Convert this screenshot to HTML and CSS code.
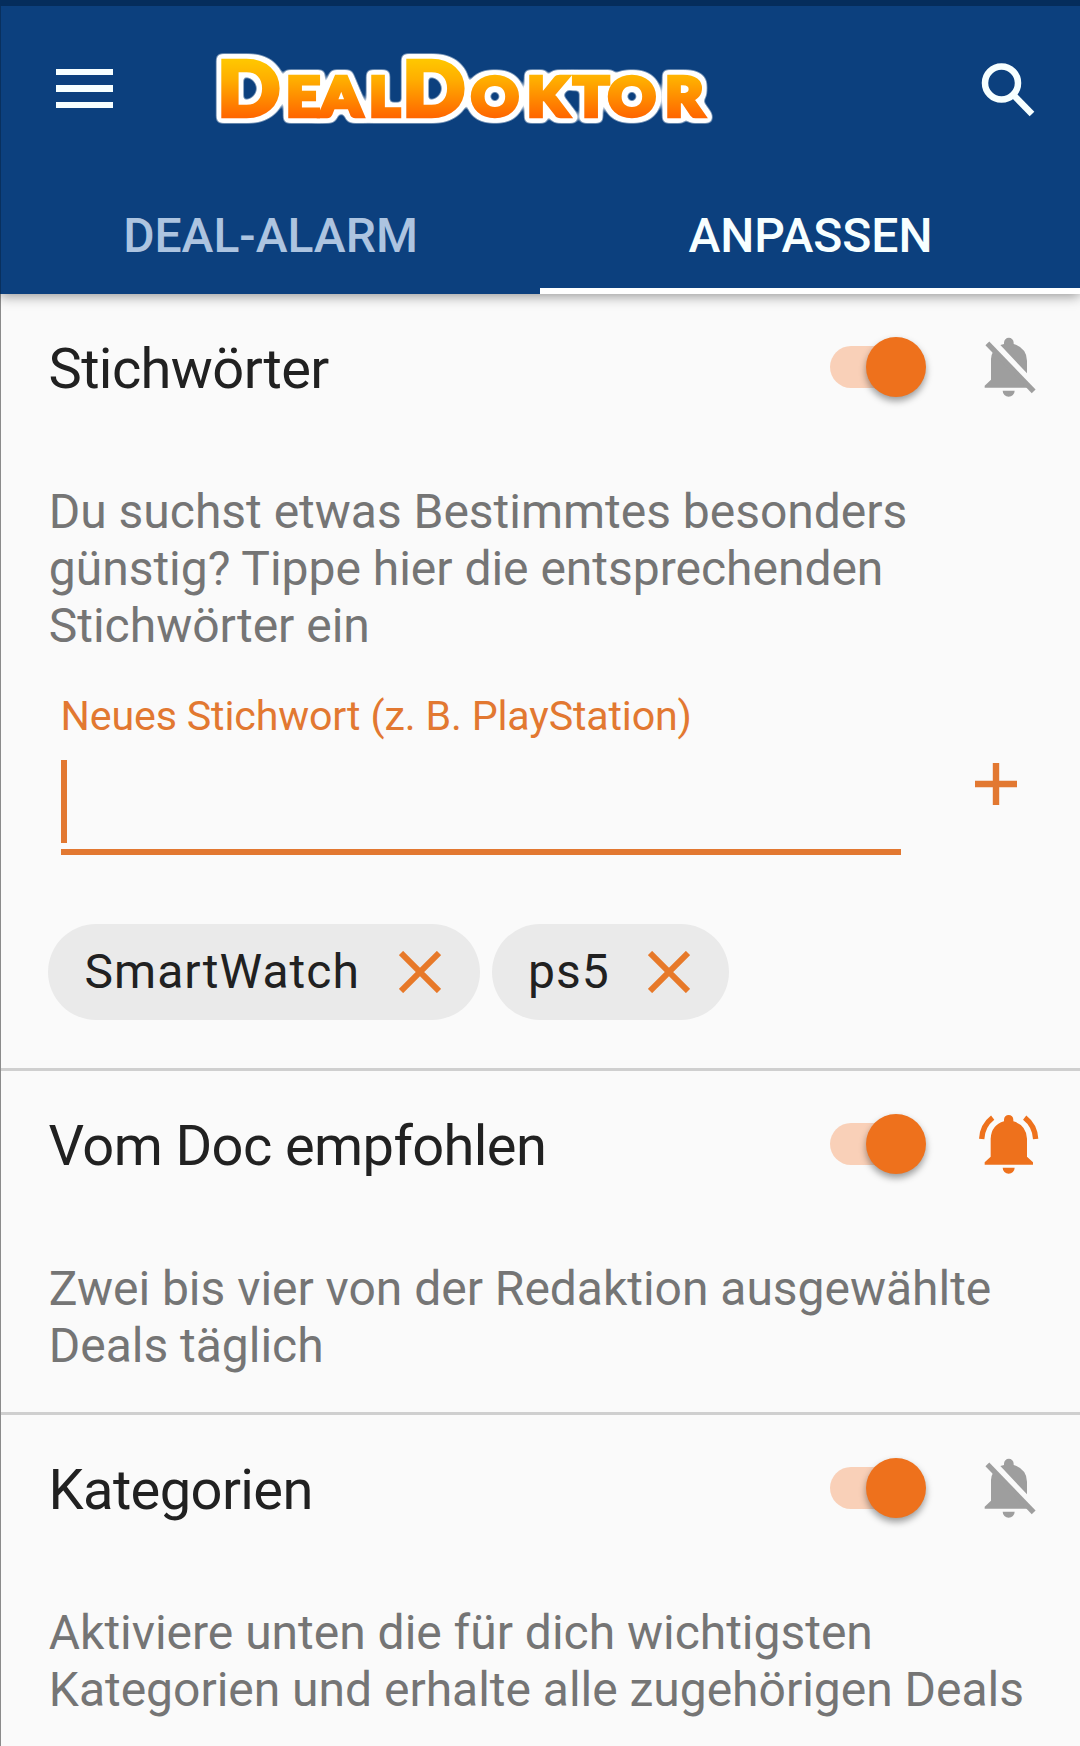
FILE: index.html
```html
<!DOCTYPE html>
<html lang="de">
<head>
<meta charset="utf-8">
<title>DealDoktor – Anpassen</title>
<link rel="stylesheet" href="styles.css">
</head>
<body>
<svg class="defs" width="0" height="0" aria-hidden="true">
  <symbol id="bell-off" viewBox="530 40 192 200">
    <path d="M570 80L688 201H553V195L572 177V115Q572 103 578 94Z M600 73Q606 71 611 70V66A14 14 0 0 1 640 66V70Q679 82 680 120V158Z M607 210H643A18 18 0 0 1 607 210Z"/>
    <path d="M561 68L700 212" fill="none" stroke="currentColor" stroke-width="16"/>
  </symbol>
  <symbol id="bell-on" viewBox="530 61 192 200">
    <path d="M553 222V215L571 198V144Q573 103 611 92V87A14 14 0 0 1 639 87V92Q678 103 680 144V198L698 215V222Z M607 231H643A18 18 0 0 1 607 231Z"/>
    <path d="M544 145Q546 105 577 81M706 145Q704 105 673 81" fill="none" stroke="currentColor" stroke-width="16"/>
  </symbol>
  <symbol id="cross" viewBox="0 0 42 42"><path d="M2 2L40 40M40 2L2 40" fill="none" stroke="currentColor" stroke-width="6"/></symbol>
</svg>
<div class="screen">
  <header class="header">
    <div class="toolbar">
      <button class="menu" aria-label="Menü"><span></span><span></span><span></span></button>
      <svg class="logo" width="510" height="100" viewBox="209 39 510 100">
        <defs>
          <linearGradient id="gold" gradientUnits="userSpaceOnUse" x1="0" y1="59" x2="0" y2="118"><stop offset="0" stop-color="#ffc800"/><stop offset=".35" stop-color="#ffae00"/><stop offset="1" stop-color="#ff6500"/></linearGradient>
          <filter id="outline" filterUnits="userSpaceOnUse" x="190" y="39" width="500" height="100" color-interpolation-filters="sRGB">
            <feMorphology in="SourceAlpha" operator="dilate" radius="3"/>
            <feGaussianBlur stdDeviation="2.4"/>
            <feComponentTransfer result="grown"><feFuncA type="linear" slope="5" intercept="-.6"/></feComponentTransfer>
            <feFlood flood-color="#fff"/>
            <feComposite in2="grown" operator="in"/>
            <feMerge><feMergeNode/><feMergeNode in="SourceGraphic"/></feMerge>
          </filter>
        </defs>
        <text class="logo-text" y="116" transform="scale(1.08 1)" filter="url(#outline)"><tspan class="cap" x="201.3">D</tspan><tspan x="265 296.9 341.9">EAL</tspan><tspan class="cap" x="372.8">D</tspan><tspan x="436.4 488.1 531.1 563.2 615.9">OKTOR</tspan></text>
      </svg>
      <svg class="search" width="54" height="56" viewBox="0 0 54 56"><circle cx="20.5" cy="21" r="16.5"/><path d="M32.5 33L51 52"/></svg>
    </div>
    <nav class="tabs">
      <a class="tab"><span>DEAL-ALARM</span></a>
      <a class="tab active"><span>ANPASSEN</span></a>
    </nav>
  </header>
  <main>
    <section class="section">
      <div class="head"><h2>Stichwörter</h2><span class="switch"></span><svg class="bell"><use href="#bell-off"/></svg></div>
      <p class="desc">Du suchst etwas Bestimmtes besonders<br>günstig? Tippe hier die entsprechenden<br>Stichwörter ein</p>
      <div class="entry">
        <div class="field"><label>Neues Stichwort (z. B. PlayStation)</label><div class="input"><i class="caret"></i></div></div>
        <svg class="add" width="42" height="42" viewBox="0 0 42 42"><path d="M0 21H42M21 0V42"/></svg>
      </div>
      <div class="chips">
        <span class="chip"><span>SmartWatch</span><svg><use href="#cross"/></svg></span>
        <span class="chip"><span>ps5</span><svg><use href="#cross"/></svg></span>
      </div>
    </section>
    <section class="section">
      <div class="head"><h2>Vom Doc empfohlen</h2><span class="switch"></span><svg class="bell on"><use href="#bell-on"/></svg></div>
      <p class="desc">Zwei bis vier von der Redaktion ausgewählte<br>Deals täglich</p>
    </section>
    <section class="section">
      <div class="head"><h2>Kategorien</h2><span class="switch"></span><svg class="bell"><use href="#bell-off"/></svg></div>
      <p class="desc">Aktiviere unten die für dich wichtigsten<br>Kategorien und erhalte alle zugehörigen Deals</p>
    </section>
  </main>
</div>
</body>
</html>
```
FILE: styles.css
```css
* { box-sizing: border-box; }
body { margin: 0; background: #fafafa; font-family: Roboto, "Liberation Sans", sans-serif; }
.defs { display: block; }
.screen { width: 1080px; height: 1746px; overflow: hidden; box-shadow: inset 1px 0 #8b8b8b; }
.header { height: 294px; background: #0c407e; border-top: 6px solid #052d5c; box-shadow: inset 1px 0 #09305e, 0 2px 12px rgba(0,0,0,.42); display: flex; flex-direction: column; }
.toolbar { height: 166px; display: flex; align-items: flex-start; padding: 33px 45px 0 56px; }
.menu { margin-top: 30px; width: 57px; padding: 0; border: 0; background: none; display: grid; gap: 10px; }
.menu span { height: 6.4px; background: #f7ffff; }
.logo { margin-left: 96px; }
.logo-text { font: 900 54px Lato, sans-serif; fill: url(#gold); stroke: url(#gold); stroke-width: 4.5px; }
.logo-text .cap { font-size: 76px; }
.search { margin: 23px 0 0 auto; fill: none; stroke: #f7ffff; stroke-width: 6.5; }
.tabs { flex: 1; display: flex; }
.tab { flex: 1; display: flex; justify-content: center; padding: 36px 0 0 1px; font-size: 48px; font-weight: 500; line-height: 56px; color: #adc4e0; }
.active { color: #f7ffff; border-bottom: 6px solid #fff; }
.section { padding: 0 40px 0 47px; height: 344px; border-bottom: 3px solid #cfcfcf; margin-left: 1px; }
.section:first-child { height: 777px; }
.section:last-child { border: 0; }
.head { height: 146px; display: flex; align-items: center; }
h2 { margin: 4px auto 0 .5px; font-size: 56px; line-height: 66px; font-weight: 400; letter-spacing: -.6px; color: #212121; }
.switch { width: 84px; height: 42px; border-radius: 21px; background: #f9d0b8; display: flex; justify-content: flex-end; align-items: center; }
.switch::after { content: ""; width: 60px; height: 60px; flex: none; border-radius: 50%; background: #ee711c; box-shadow: 0 4px 7px rgba(0,0,0,.38); margin-right: -12px; }
.bell { width: 64px; height: 66.67px; margin: 0 -1px 0 63px; fill: currentColor; color: #9e9e9e; }
.bell.on { color: #ee711c; }
.desc { margin: 43px 0 0 .8px; font-size: 48px; line-height: 57px; letter-spacing: -.02px; color: #757575; white-space: nowrap; }
.entry { display: flex; padding: 38px 23px 0 12.5px; justify-content: space-between; color: #e27831; }
.field { width: 840px; }
label { display: block; font-size: 41.2px; line-height: 48px; letter-spacing: -.16px; }
.input { height: 115px; border-bottom: 6px solid; padding-top: 20px; }
.caret { display: block; width: 6px; height: 83px; background: currentColor; }
.add { margin-top: 71px; stroke: currentColor; stroke-width: 6.4; }
.chips { display: flex; gap: 12px; margin-top: 69px; }
.chip { height: 96px; border-radius: 48px; background: #eaeaea; padding: 0 39px 1px 36.5px; display: flex; align-items: center; gap: 38.5px; font-size: 48px; letter-spacing: 1.05px; color: #212121; }
.chip svg { width: 42px; height: 42px; color: #e77929; }
```
